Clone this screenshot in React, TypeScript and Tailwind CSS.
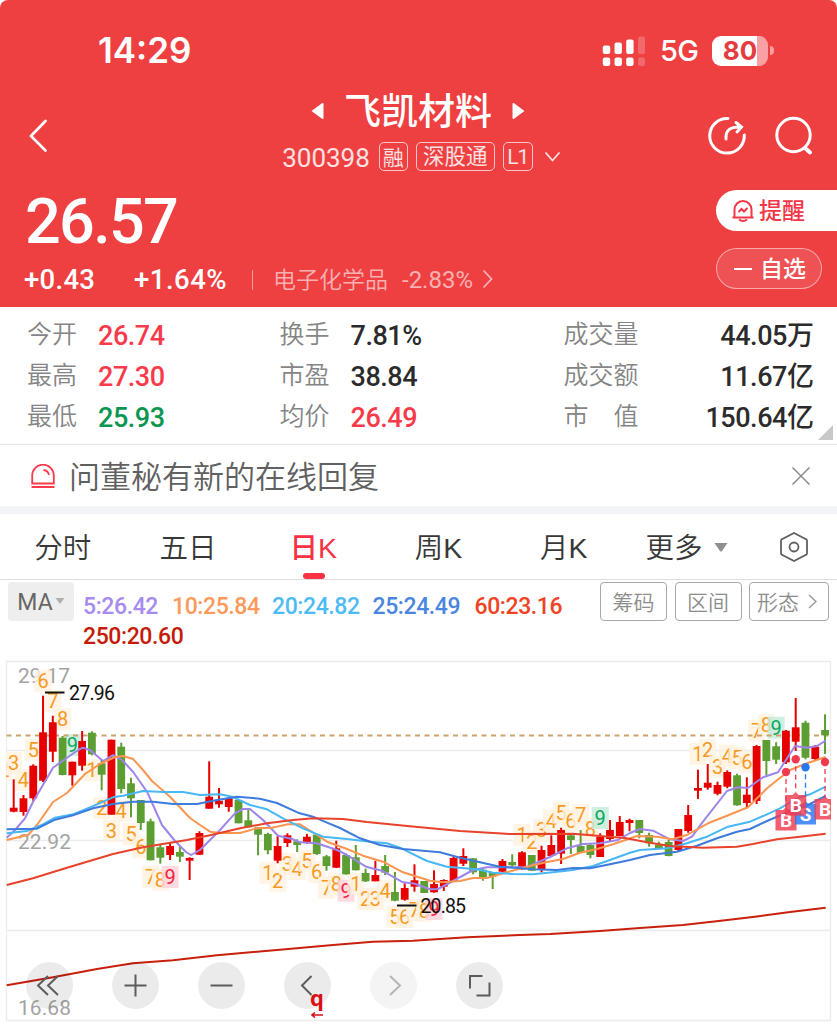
import type { ReactNode } from 'react'

const RED = '#e60000'
const GREEN = '#5c9e31'
const STEP = 9.775
const X0 = 13.7

type Candle = ['r' | 'g', number, number, number, number]

// [direction, body top, body bottom, wick top, wick bottom]
const candles: Candle[] = [
    ['r', 807.7, 811.7, 779.3, 812.3],
    ['r', 798.3, 812, 795, 815.7],
    ['r', 765.7, 798.3, 764.3, 801],
    ['r', 732.3, 780.7, 695.7, 782],
    ['r', 722.3, 751.7, 715.7, 762],
    ['g', 737.7, 775, 736, 775.3],
    ['r', 761.7, 775.3, 761.7, 785.7],
    ['r', 741, 765.7, 731, 770.7],
    ['g', 732.7, 754.3, 731.3, 755.3],
    ['g', 763.3, 774.7, 760, 790.3],
    ['r', 739.7, 814.7, 739.7, 814.7],
    ['g', 746.7, 789, 742.7, 793.3],
    ['g', 783.3, 798.3, 777.7, 817.3],
    ['g', 800, 823, 800, 830],
    ['g', 821.3, 860.3, 818.7, 860.3],
    ['g', 847.3, 857.7, 844.3, 863.7],
    ['r', 846, 855, 842.3, 860],
    ['g', 852, 856.7, 847, 862],
    ['r', 858, 860.7, 857.3, 880],
    ['r', 833, 854.7, 831.3, 855],
    ['r', 796.7, 808.7, 761.3, 808.7],
    ['r', 800.7, 804.3, 788, 807.7],
    ['r', 798.3, 807, 797.3, 811.7],
    ['g', 800, 823.3, 800, 823.3],
    ['g', 820.3, 827.3, 809.3, 827.3],
    ['g', 827.3, 834.7, 827.3, 855.3],
    ['g', 834, 850.3, 832.7, 854.3],
    ['r', 846, 860.7, 836, 863.3],
    ['r', 835.3, 843, 833.3, 847],
    ['g', 841.3, 845, 839.3, 852],
    ['r', 836.7, 842.7, 834, 843.7],
    ['g', 834.7, 854, 834, 855],
    ['g', 856.3, 866, 855, 870.7],
    ['r', 848.3, 867.7, 840.7, 868],
    ['g', 855, 874.3, 853.7, 874.7],
    ['g', 857.3, 870.3, 845, 870.3],
    ['g', 873, 881.3, 868.7, 882],
    ['r', 875, 881.3, 861, 881.3],
    ['g', 866, 872.7, 855, 875],
    ['g', 892, 900.7, 872, 901.3],
    ['r', 888, 899.7, 883.3, 900.7],
    ['r', 880.3, 886.7, 864.3, 891.7],
    ['g', 881, 893, 881, 893],
    ['r', 884, 892.3, 870.3, 892.7],
    ['r', 880, 886.7, 879.3, 891],
    ['r', 858, 881, 856, 881.3],
    ['r', 856, 863.7, 848.3, 866],
    ['g', 858.3, 872.3, 858.3, 874.3],
    ['g', 869.7, 879, 868.3, 880.7],
    ['g', 872, 876.7, 872, 889],
    ['r', 861, 871.7, 859, 872.3],
    ['g', 862, 865.3, 854.3, 867.7],
    ['r', 852.3, 869.3, 851.3, 869.7],
    ['g', 855, 870.7, 855, 870.7],
    ['r', 850, 870, 845.7, 872.3],
    ['r', 845, 856, 835.3, 856.7],
    ['r', 830, 853.7, 827.7, 864],
    ['g', 835.3, 840, 834, 854],
    ['g', 846, 853, 830, 853],
    ['g', 845, 855, 844, 858.3],
    ['r', 836.7, 857, 833.3, 857],
    ['r', 830, 839, 820, 841],
    ['r', 822, 836, 816, 836.3],
    ['r', 820, 823, 818.7, 831.3],
    ['g', 820, 833, 820, 838.3],
    ['g', 835, 843.3, 832.7, 846.7],
    ['g', 844.7, 848.3, 841.7, 848.7],
    ['g', 842, 856, 840, 856.3],
    ['r', 829, 850, 829, 851.7],
    ['r', 815, 831, 805, 832.7],
    ['r', 788, 790.7, 769.7, 799],
    ['r', 782.7, 787.7, 764, 789.7],
    ['r', 785, 793.7, 781.7, 795.3],
    ['r', 772, 786.7, 770.3, 788.3],
    ['g', 775.3, 805.3, 773.7, 805.7],
    ['r', 794.7, 803, 777.3, 808],
    ['r', 746, 801, 745, 804],
    ['g', 740, 761, 740, 775.3],
    ['g', 746.3, 759.7, 742.3, 764],
    ['r', 730.7, 762.3, 730, 764],
    ['r', 727.3, 741.7, 698, 751],
    ['g', 722.7, 757.7, 720.7, 759.3],
    ['r', 746.7, 759, 745, 760],
    ['g', 730, 735.3, 714.3, 754],
]

const lines = [
    {
        color: '#9f85ea',
        points: '6.7,837.7 15,830 25,818.3 33,802 53,767.7 72,754.3 79,749.5 83,747.7 90,750 103,761 113,755 122,760 133,771.7 147,791.7 162,825 175,841 186,852 191,855 200,850 220,830 235,813.3 243,809 250,809 263,820 278,835.7 292,839 300,842.3 317,843.3 337,850 347,855 366,866.7 382,870.7 403,882.3 414,883.5 430,889.3 438,889 453,881 473,870 487,867.3 510,867.3 527,867 550,857 567,848.3 583,844 600,843.3 618,840 630,833 640,829 653,830.7 670,839.3 683,841 692,836.7 703,821.7 727,791 738,787.3 748,788 763,777.3 778,772.3 795,746 807,747.7 817,746 825.7,740.7',
    },
    {
        color: '#fb9550',
        points: '6.7,840 28,835 37,825 53,802 67,793 85,774 100,764 115,757 123,756 133,759 143,770 152,781 170,796.7 190,818 200,825 210,831.7 220,833 240,833 257,828.3 272,827.7 288,824.3 300,824.3 317,835 327,841.7 347,849 363,855.7 383,861.7 403,872.3 430,880.7 443,882.3 460,881 473,878 487,878 507,872.3 530,866 547,862 563,859 580,852.7 597,849 613,844.3 637,836 657,836.7 672,839.3 687,835 708,823.3 727,815.7 748,807.3 767,788.3 790,770 807,763.3 825.7,757',
    },
    {
        color: '#47b8f5',
        points: '6.7,833.3 27,831 43,824.3 55,817.7 73,814.3 97,804.3 113,797.3 123,795.7 143,791 163,792 183,792 200,795 220,794.3 232,796.7 250,805 267,809.3 283,818.3 303,828.3 323,836.7 347,839 370,841.7 387,843.3 400,847.7 410,852.7 427,861 447,866.7 477,869.3 493,872.7 513,874 533,874.3 553,872.3 573,870 593,866 610,860 630,852.7 640,850 667,848.3 687,843.3 707,836.7 728,826.7 750,821.7 767,814.3 780,808.3 797,798.3 810,794.3 825.7,786.7',
    },
    {
        color: '#3d7bdc',
        points: '6.7,829.3 37,828.7 55,819.7 73,815.3 93,808.3 113,804 133,801.7 153,801.7 173,804 197,804 217,800 237,796.7 260,798.7 277,803 298,812.7 313,816.7 327,822.7 340,828 360,838.3 380,845 403,849 440,852.3 460,857.7 480,862.3 500,866.7 533,869.3 557,870 573,868 590,868.3 610,864.3 630,860 650,855 677,851.7 697,845.7 717,838.3 737,831.7 750,829 767,821 793,810 808,805 825.7,796',
    },
    {
        color: '#e8432a',
        points: '6.7,885 33,878.3 67,867.7 113,854 143,847.3 187,840 210,835.3 240,828.3 267,823.3 293,820 313,818.3 343,819 367,822 410,826.3 460,831 510,834 573,833.7 600,836 625,838 647,842.3 670,846 703,847.7 737,846.7 753,844 777,839.3 800,836.7 825.7,833.7',
    },
    {
        color: '#c8200c',
        points: '6.7,985.3 53,977.3 97,969 133,963.3 173,960.3 217,955.3 277,950 333,945 373,941.7 413,940.7 467,937.3 520,935 550,934 600,931 640,928 683,925 723,920.5 757,916.500 790,912 825.7,907.7',
    },
]

// [candle index, label, centre y]
const counts: [number, string, number][] = [
    [-1, '2', 770], [0, '3', 763], [1, '4', 780], [2, '5', 750], [3, '6', 681], [4, '7', 700.7], [5, '8', 719.3], [6, '9g', 745],
    [8, '1', 770], [9, '2', 808], [10, '3', 830.7], [11, '4', 810.7], [12, '5', 834], [13, '6', 847.3], [14, '7', 876.7], [15, '8', 880], [16, '9r', 877],
    [26, '1', 873], [27, '2', 880.7], [28, '3', 864], [29, '4', 869], [30, '5', 860.7], [31, '6', 872], [32, '7', 887.7], [33, '8', 884], [34, '9r', 890.7],
    [35, '1', 884], [36, '2', 899], [37, '3', 898.7], [38, '4', 890.7], [39, '5', 916.7], [40, '6', 917], [41, '7', 910], [42, '8', 910.7], [43, '9r', 909],
    [52, '1', 835], [53, '2', 842], [54, '3', 830], [55, '4', 820.7], [56, '5', 812.7], [57, '6', 820.7], [58, '7', 815], [59, '8', 829], [60, '9g', 818],
    [70, '1', 754], [71, '2', 750], [72, '3', 766.7], [73, '4', 755.7], [74, '5', 758], [75, '6', 762], [76, '7', 730.7], [77, '8', 725], [78, '9g', 727.7],
]

const trades = [
    { x: 786, dot: 772, y: 820, label: 'B' },
    { x: 805.5, dot: 767.3, y: 814, label: 'S' },
    { x: 795.7, dot: 759.3, y: 805, label: 'B' },
    { x: 825, dot: 762, y: 809, label: 'B' },
]

const axis = [
    { text: '29.17', y: 683, w: 52 },
    { text: '22.92', y: 849, w: 53 },
    { text: '16.68', y: 1015, w: 53 },
]

function CountTag({ index, label, y }: { index: number; label: string; y: number }) {
    const x = X0 + index * STEP
    const kind = label[1]
    const bg = kind === 'g' ? '#c5ecdb' : kind === 'r' ? '#ffd3da' : '#fff2e0'
    const fg = kind === 'g' ? '#0ca860' : kind === 'r' ? '#f0243c' : '#f59a23'
    return (
        <g>
            <path d={`M${x - 8.5} ${y - 11}h17v22h-17z`} fill={bg} opacity="0.82" />
            <text x={x} y={y + 7} fontSize="20" textAnchor="middle" fill={fg}>{label[0]}</text>
        </g>
    )
}

function KLineChart() {
    return (
        <svg viewBox="0 660 837 364" className="block h-[364px] w-[837px] font-['Roboto','Liberation_Sans',sans-serif]">
            <defs>
                <clipPath id="plot">
                    <rect x="6" y="661" width="825" height="360" />
                </clipPath>
            </defs>
            <path d="M6.5 661.5H830.5V1020.5H6.5ZM6.5 750.5H830.5M6.5 840.5H830.5M6.5 930.5H830.5" fill="none" stroke="#ececec" strokeWidth="1.3" />
            <g clipPath="url(#plot)">
                {axis.map((a) => (
                    <text key={a.text} x="18" y={a.y} fontSize="21" fill="#a3a3a3" textLength={a.w}>{a.text}</text>
                ))}
                {counts.map(([i, label, y]) => <CountTag key={i} index={i} label={label} y={y} />)}
                <path d="M6.5 735.5H830.5" stroke="#cda36c" strokeWidth="1.8" strokeDasharray="5 4.5" />
                {candles.map(([dir, top, bottom, high, low], i) => {
                    const x = X0 + i * STEP
                    const fill = dir === 'r' ? RED : GREEN
                    return (
                        <g key={i} fill={fill}>
                            <rect x={x - 1} y={high} width="2" height={low - high} />
                            <rect x={x - 3.9} y={top} width="7.8" height={bottom - top} />
                        </g>
                    )
                })}
                {lines.map((l) => (
                    <polyline key={l.color} points={l.points} fill="none" stroke={l.color} strokeWidth="2" strokeLinejoin="round" />
                ))}
                {trades.map((t) => {
                    const color = t.label === 'B' ? '#f03a50' : '#2878f5'
                    return (
                        <g key={t.x}>
                            <path d={`M${t.x} ${t.dot + 7}V${t.y - 13}`} stroke={color} strokeWidth="1.3" strokeDasharray="5 3.5" />
                            <circle cx={t.x} cy={t.dot} r="4.2" fill={color} />
                            <path d={`M${t.x - 10.5} ${t.y - 10}h7.5l3 -3 3 3h7.5v20.5h-21z`} fill={color} opacity="0.82" />
                            <text x={t.x} y={t.y + 7} fontSize="19" fontWeight="700" textAnchor="middle" fill="#fff">{t.label}</text>
                        </g>
                    )
                })}
            </g>
            <path d="M45 692.5H64.5M397 905.5H416.5" stroke="#111" strokeWidth="2" />
            <text x="69" y="700" fontSize="19.5" fill="#111" textLength="46">27.96</text>
            <text x="420.5" y="913" fontSize="19.5" fill="#111" textLength="45.5">20.85</text>
        </svg>
    )
}

function ToolButton({ children, dim }: { children: ReactNode; dim?: boolean }) {
    return (
        <button className={`flex size-[47px] items-center justify-center rounded-full ${dim ? 'bg-black/[0.045]' : 'bg-black/[0.08]'}`}>
            <svg viewBox="0 0 47 47" className={`size-[47px] fill-none stroke-2 ${dim ? 'stroke-[#b5b5b5]' : 'stroke-[#5c5c5c]'}`}>
                {children}
            </svg>
        </button>
    )
}

function Header() {
    return (
        <header className="h-[307px] rounded-t-[8px] bg-[#ee3f41] text-white">
            <div className="flex h-[88px] items-center pt-[13px] pl-[98px]">
                <span className="w-[504px] font-['Inter',sans-serif] text-[35px] leading-none font-semibold">14:29</span>
                <svg viewBox="0 0 43 30" className="h-[30px] w-[43px] fill-white">
                    <rect x="0.8" y="9.5" width="7.4" height="8.5" rx="2" />
                    <rect x="12.5" y="6.5" width="7.4" height="11.5" rx="2" />
                    <rect x="24.2" y="3.5" width="7.4" height="14.5" rx="2" />
                    <rect x="36" y="0.5" width="7" height="17.5" rx="2" opacity="0.22" />
                    <rect x="0.8" y="21.5" width="7.4" height="8.5" rx="2" />
                    <rect x="12.5" y="21.5" width="7.4" height="8.5" rx="2" />
                    <rect x="24.2" y="21.5" width="7.4" height="8.5" rx="2" />
                    <rect x="36" y="21.5" width="7" height="8.5" rx="2" opacity="0.22" />
                </svg>
                <span className="ml-[15px] w-[38px] font-['Inter',sans-serif] text-[29px] leading-none font-medium tracking-[-0.8px] whitespace-nowrap">5G</span>
                <div className="ml-[14px] flex h-[30px] w-[56px] items-center justify-center overflow-hidden rounded-[9px] bg-linear-to-r from-white from-80% to-[#f8a0a2] to-80%">
                    <span className="font-['Inter',sans-serif] text-[26px] leading-none font-bold text-[#e43c40]">80</span>
                </div>
                <span className="ml-[2px] h-[9px] w-[4px] rounded-r-full bg-white/50" />
            </div>

            <div className="flex h-[90px] justify-between">
                <svg viewBox="0 0 20 34" className="mt-[30px] ml-[28px] h-[34px] w-[20px] fill-none stroke-white stroke-[2.7]">
                    <path d="M17.5 3 3 18 17.5 32.5" strokeLinecap="round" strokeLinejoin="round" />
                </svg>
                <div className="ml-[89px] flex flex-col items-center">
                    <div className="mr-[7px] flex h-[46px] items-center gap-[20px]">
                        <svg viewBox="0 0 13 18" className="h-[18px] w-[13px] fill-white">
                            <path d="M0.5 9 11 1.2Q12.5 0.5 12.5 2V16Q12.5 17.5 11 16.8Z" />
                        </svg>
                        <h1 className="mt-[3px] text-[37px] leading-none font-medium">飞凯材料</h1>
                        <svg viewBox="0 0 13 18" className="h-[18px] w-[13px] fill-white">
                            <path d="M12.5 9 2 1.2Q0.5 0.5 0.5 2V16Q0.5 17.5 2 16.8Z" />
                        </svg>
                    </div>
                    <div className="mt-[8px] flex h-[29px] items-center text-white/85">
                        <span className="mt-[3px] mr-[9px] font-['Roboto',sans-serif] text-[26px] leading-none">300398</span>
                        <span className="mr-[8px] flex h-[29px] w-[29px] items-center justify-center rounded-[5px] border border-white/70 pt-[2px] text-[21px] leading-none">融</span>
                        <span className="mr-[8px] flex h-[29px] w-[79px] items-center justify-center rounded-[5px] border border-white/70 pt-[3px] text-[21.5px] leading-none">深股通</span>
                        <span className="mr-[11px] flex h-[29px] w-[30px] items-center justify-center rounded-[5px] border border-white/70 pt-[2px] font-['Roboto',sans-serif] text-[21px] leading-none tracking-[-1px]">L1</span>
                        <svg viewBox="0 0 17 12" className="h-[12px] w-[17px] fill-none stroke-current stroke-[1.8]">
                            <path d="M1.5 1.5 8.5 9.5 15.5 1.5" />
                        </svg>
                    </div>
                </div>
                <div className="mt-[26px] mr-[23px] flex gap-[26px]">
                    <svg viewBox="0 0 42 42" className="size-[42px] fill-none stroke-white stroke-[3]">
                        <path d="M22 4.5A17.3 17.3 0 1 0 38.3 21" strokeLinecap="round" />
                        <path d="M20 25C19.5 16.5 23.5 12.7 35 13M30 8.5 35.5 13 31 18" strokeLinecap="round" />
                    </svg>
                    <svg viewBox="0 0 40 42" className="h-[42px] w-[40px] fill-none stroke-white stroke-[3]">
                        <circle cx="19.5" cy="21" r="16.7" />
                        <path d="M31 34 36 38.5" strokeLinecap="round" strokeWidth="4" />
                    </svg>
                </div>
            </div>

            <div className="flex justify-between">
                <div className="pl-[24px] font-['Roboto','Noto_Sans_CJK_SC',sans-serif]">
                    <div className="h-[84px] pt-[12px] pl-[1px] text-[63px] leading-[64px] font-medium tracking-[-1.7px]">26.57</div>
                    <div className="flex h-[36px] items-center">
                        <span className="w-[110px] text-[27.5px] leading-none font-medium tracking-[0.3px]">+0.43</span>
                        <span className="w-[118px] text-[27.5px] leading-none font-medium tracking-[0.5px]">+1.64%</span>
                        <span className="mr-[20px] h-[20px] w-px bg-white/50" />
                        <span className="w-[129px] text-[23px] leading-none font-[350] text-white/60">电子化学品</span>
                        <span className="w-[80px] text-[24px] leading-none text-white/60">-2.83%</span>
                        <svg viewBox="0 0 11 20" className="-mt-[3px] h-[20px] w-[11px] fill-none stroke-white/60 stroke-[1.8]">
                            <path d="M1.5 1.5 9.5 10 1.5 18.5" />
                        </svg>
                    </div>
                </div>
                <div className="flex w-[121px] flex-col gap-[17px] pt-[12px]">
                    <button className="flex h-[41px] w-[121px] items-center rounded-l-full bg-white pl-[15px] text-[#f23645]">
                        <svg viewBox="0 0 24 24" className="size-[24px] fill-none stroke-current stroke-2">
                            <path d="M3.5 18V10.5a8.5 8.5 0 0 1 17 0V18M1.5 18.5H22.5M8 20.5q4 3 8 0" />
                            <path d="M7.5 13 10.5 10 13 12.5 16.5 9" />
                        </svg>
                        <span className="mt-[2px] ml-[4px] text-[23px] leading-none font-medium">提醒</span>
                    </button>
                    <button className="flex h-[41px] w-[106px] items-center rounded-full border border-white/50 bg-white/10 pl-[17px]">
                        <span className="h-[2px] w-[18px] bg-white" />
                        <span className="mt-[2px] ml-[8px] text-[23px] leading-none font-medium">自选</span>
                    </button>
                </div>
            </div>
        </header>
    )
}

const stats = [
    [['今开', '26.74', 'text-[#f93a4a]'], ['换手', '7.81%', 'text-[#2b2b2b]'], ['成交量', '44.05万', 'text-[#2b2b2b]']],
    [['最高', '27.30', 'text-[#f93a4a]'], ['市盈', '38.84', 'text-[#2b2b2b]'], ['成交额', '11.67亿', 'text-[#2b2b2b]']],
    [['最低', '25.93', 'text-[#0a9650]'], ['均价', '26.49', 'text-[#f93a4a]'], ['市　值', '150.64亿', 'text-[#2b2b2b]']],
]

function Stats() {
    return (
        <section className="relative h-[138px] border-b border-[#e6e6e6] pt-[9px]">
            {stats.map((row) => (
                <div key={row[0][0]} className="grid h-[41px] grid-cols-[252.5px_284px_250px] items-center pl-[27px] text-[25px] leading-none">
                    {row.map(([label, value, color], col) => (
                        <div key={label} className={`flex items-center ${col === 2 ? 'justify-between' : 'gap-[21px]'}`}>
                            <span className="-mt-[4px] font-[350] text-[#858585]">{label}</span>
                            <span className={`font-['Roboto','Noto_Sans_CJK_SC',sans-serif] text-[27px] font-medium tracking-[-0.45px] ${color}`}>{value}</span>
                        </div>
                    ))}
                </div>
            ))}
            <svg viewBox="0 0 15 15" className="absolute right-[4px] bottom-[4px] size-[15px] fill-[#c8c8c8]">
                <path d="M15 0V15H0Z" />
            </svg>
        </section>
    )
}

function Notice() {
    return (
        <section className="flex h-[61px] items-center pl-[31px]">
            <svg viewBox="0 0 24 24" className="size-[24px] fill-none stroke-[#f93a4a] stroke-[1.8]">
                <path d="M1.2 19.5V11.5a10.8 10.8 0 0 1 21.6 0V19.5ZM0.5 23H23.5M12.5 6q4.500 0.500 5.500 5" />
            </svg>
            <span className="mt-[4px] ml-[14px] flex-1 text-[31px] leading-none font-[350] text-[#606060]">问董秘有新的在线回复</span>
            <svg viewBox="0 0 18 18" className="mr-[27px] size-[18px] stroke-[#8c8c8c] stroke-[1.5]">
                <path d="M0.500 0.500 17.500 17.500M17.500 0.500 0.500 17.500" />
            </svg>
        </section>
    )
}

function Tabs() {
    return (
        <nav className="flex h-[66px] items-center border-b border-[#dedede] text-[28.5px] leading-none font-[350] text-[#383838]">
            {['分时', '五日', '日K', '周K', '月K'].map((tab) => (
                <div
                    key={tab}
                    className={`relative flex h-full w-[125.3px] items-center justify-center pt-[3px] ${tab === '日K' ? 'font-medium text-[#fa3246]' : ''}`}
                >
                    {tab}
                    {tab === '日K' && <span className="absolute bottom-0 left-[52px] h-[6px] w-[22px] rounded-[3px] bg-[#fa3246]" />}
                </div>
            ))}
            <span className="mt-[3px] ml-[19px]">更多</span>
            <svg viewBox="0 0 14 9" className="mt-[2px] ml-[11px] h-[9px] w-[14px] fill-[#909090]">
                <path d="M0.500 0H13.500L7.700 8.500H6.300Z" />
            </svg>
            <svg viewBox="0 0 28 30" className="ml-[52px] h-[30px] w-[28px] fill-none stroke-[#606060] stroke-[1.8]">
                <path d="M14 1 26.500 7.500Q27 8 27 9V21Q27 22 26.500 22.500L14 29 1.500 22.500Q1 22 1 21V9Q1 8 1.500 7.500Z" />
                <circle cx="14" cy="15" r="4.500" />
            </svg>
        </nav>
    )
}

const averages = [
    ['5:26.42', 'w-[89px] text-[#a68bf0]'],
    ['10:25.84', 'w-[100px] text-[#fb9a5a]'],
    ['20:24.82', 'w-[100.5px] text-[#4dbbf5]'],
    ['25:24.49', 'w-[102px] text-[#4a86e0]'],
    ['60:23.16', 'w-[100px] text-[#ee4424]'],
    ['250:20.60', 'text-[#c41c08]'],
]

function Indicators() {
    return (
        <section className="flex h-[80px] items-start pt-[2px] pl-[8px]">
            <button className="flex h-[39px] w-[66px] items-center justify-center gap-[2px] rounded-[4px] bg-[#eeeeee] pt-[2px] font-['Roboto',sans-serif] text-[23px] leading-none text-[#666]">
                MA
                <svg viewBox="0 0 10 6" className="-mt-[3px] h-[6px] w-[10px] fill-[#b0b0b0]">
                    <path d="M0.500 0H9.500L5 6Z" />
                </svg>
            </button>
            <div className="mt-[10px] ml-[9px] flex w-[509px] flex-wrap font-['Roboto',sans-serif] text-[23px] leading-[30px] font-medium tracking-[-0.4px]">
                {averages.map(([text, cls]) => (
                    <span key={text} className={cls}>{text}</span>
                ))}
            </div>
            <div className="ml-[8px] flex gap-[7.5px] text-[21px] leading-none font-[350] text-[#8c8c8c]">
                <button className="h-[39px] w-[67px] rounded-[4px] border border-[#a8a8a8] pt-[2px]">筹码</button>
                <button className="h-[39px] w-[67px] rounded-[4px] border border-[#a8a8a8] pt-[2px]">区间</button>
                <button className="flex h-[39px] w-[80px] items-center gap-[9px] rounded-[4px] border border-[#a8a8a8] pt-[2px] pl-[7px]">
                    形态
                    <svg viewBox="0 0 9 15" className="-mt-[2px] h-[15px] w-[9px] fill-none stroke-[#999] stroke-[1.5]">
                        <path d="M1 1 8 7.500 1 14" />
                    </svg>
                </button>
            </div>
        </section>
    )
}

export default function App() {
    return (
        <div className="h-[1024px] w-[837px] overflow-hidden bg-white font-['Liberation_Sans','Noto_Sans_CJK_SC',sans-serif]">
            <Header />
            <Stats />
            <Notice />
            <div className="h-[8px] bg-[#f2f4f8]" />
            <Tabs />
            <Indicators />
            <div className="relative">
                <KLineChart />
                <div className="absolute top-[302px] left-[25.5px] flex gap-[39px]">
                    <ToolButton><path d="M22 14 12 23.500 22 33M32 14 22 23.500 32 33" /></ToolButton>
                    <ToolButton><path d="M12.500 23.500H34.500M23.500 12.500V34.500" /></ToolButton>
                    <ToolButton><path d="M12.500 23.500H34.500" /></ToolButton>
                    <ToolButton><path d="M27.500 14 18 23.500 27.500 33" /></ToolButton>
                    <ToolButton dim><path d="M20 14 30 23.500 20 33" /></ToolButton>
                    <ToolButton><path d="M14 26.500V14H26.500M20.500 33.500H33.500V20.500" /></ToolButton>
                </div>
                <div className="absolute top-[327px] left-[310px] flex flex-col items-center text-[#d90f14]">
                    <span className="font-['Open_Sans',sans-serif] text-[22px] leading-[21px] font-bold">q</span>
                    <svg viewBox="0 0 12 6" className="mt-[4px] h-[6px] w-[12px] fill-none stroke-current stroke-[1.5]">
                        <path d="M12 3H1M4 0.500 1 3 4 5.500" />
                    </svg>
                </div>
            </div>
        </div>
    )
}
